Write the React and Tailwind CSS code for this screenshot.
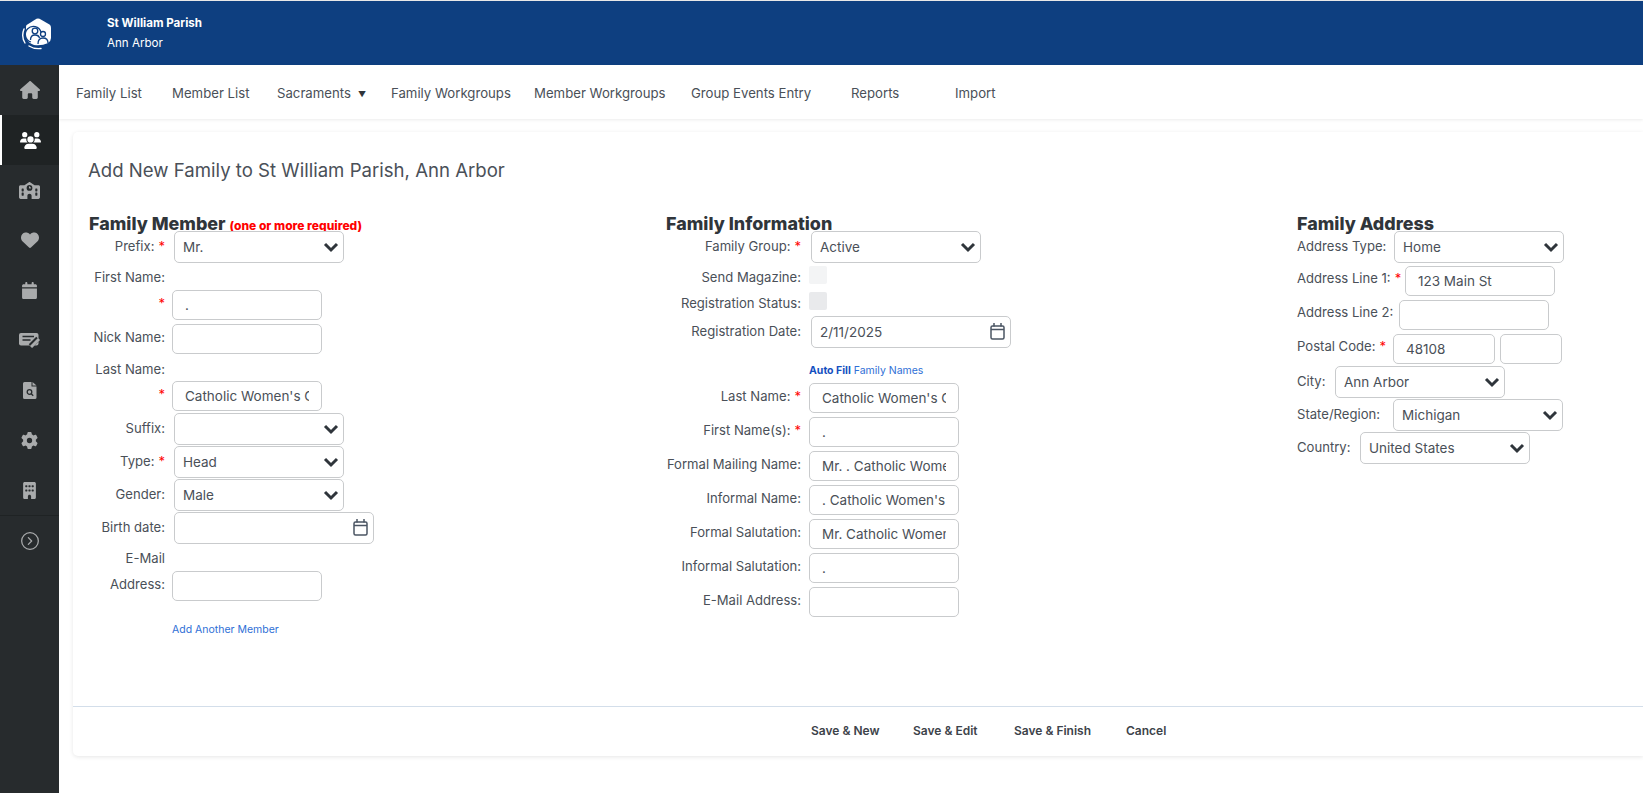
import React from "react";
import { CircleChevronRight } from "lucide-react";
import { FaHouse, FaUsers, FaSchool, FaHeart, FaCalendar, FaGear, FaBuilding } from "react-icons/fa6";

const Logo = () => (
  <svg width="30" height="32" viewBox="0 0 30 32" fill="none">
    <path d="M14.500 0.800 Q16 0 17.500 0.800 L27.500 6.500 Q29 7.500 29 9.500 V20 Q29 23 26 25 Q20 28 12 27 Q6 25 4 20 V8.500 Q4 7.500 5 6.800 Z" fill="#fff" />
    <path d="M9 24 A8 8 0 1 1 19 14" stroke="#0e3f80" strokeWidth="1.300" />
    <circle cx="13" cy="13" r="2.800" stroke="#0e3f80" strokeWidth="1.300" />
    <circle cx="21" cy="16" r="2.500" stroke="#0e3f80" strokeWidth="1.300" />
    <path d="M8.500 22 C8.500 18 10.500 17 13 17 C15 17 17 18 17.500 20" stroke="#0e3f80" strokeWidth="1.300" />
    <path d="M16 26 C16 21.500 18 20 21 20 C24 20 26 21.500 26 25" fill="#fff" stroke="#0e3f80" strokeWidth="1.300" />
    <path d="M2 11 C0 16 0.500 21 3 25" stroke="#fff" strokeWidth="1.400" strokeLinecap="round" />
    <path d="M7 28 C10 30 14 31 19 30.500" stroke="#fff" strokeWidth="1.400" strokeLinecap="round" />
  </svg>
);

const NotesPen = () => (
  <svg width="22" height="15" viewBox="0 0 22 15">
    <rect x="0" y="0" width="19.500" height="12.500" rx="2" fill="#a9abac" />
    <path d="M3.500 3.500h11.500M3.500 7h8" stroke="#272b2d" strokeWidth="1.300" />
    <path d="M11.500 13 L19 5.500" stroke="#272b2d" strokeWidth="5" />
    <path d="M12 14 L20 6" stroke="#a9abac" strokeWidth="3" />
  </svg>
);

const FileSearch = () => (
  <svg width="14" height="17" viewBox="0 0 14 17" fill="#a9abac">
    <path d="M1.500 0H8.500V4.500H13.500V15.500A1.500 1.500 0 0 1 12 17H1.500A1.500 1.500 0 0 1 0 15.500V1.500A1.500 1.500 0 0 1 1.500 0z" />
    <path d="M9.500 0L13.500 3.500H9.500z" />
    <circle cx="6.500" cy="10" r="2.300" fill="none" stroke="#272b2d" strokeWidth="1.300" />
    <path d="M8.200 11.700l2 2" stroke="#272b2d" strokeWidth="1.300" />
  </svg>
);

const sideItems = [
  { icon: <FaHouse size={20} color="#a9abac" /> },
  { icon: <FaUsers size={21} color="#fff" />, active: true },
  { icon: <FaSchool size={21} color="#a9abac" /> },
  { icon: <FaHeart size={18} color="#a9abac" /> },
  { icon: <FaCalendar size={17} color="#a9abac" /> },
  { icon: <NotesPen /> },
  { icon: <FileSearch /> },
  { icon: <FaGear size={17} color="#a9abac" /> },
  { icon: <FaBuilding size={17} color="#a9abac" /> },
];

const navItems = [
  ["Family List", "w-[96px]"],
  ["Member List", "w-[105px]"],
  ["Sacraments", "w-[114px]"],
  ["Family Workgroups", "w-[143px]"],
  ["Member Workgroups", "w-[157px]"],
  ["Group Events Entry", "w-[160px]"],
  ["Reports", "w-[104px]"],
  ["Import", "w-[60px]"],
];

const Req = () => <span className="text-[#ff0000] ml-1">*</span>;

const Chevron = () => (
  <svg className="absolute right-[5px] top-[10px] pointer-events-none" width="16" height="12" viewBox="0 0 16 12" fill="none">
    <path d="M2 3l6 6 6-6" stroke="#2f353b" strokeWidth="3" />
  </svg>
);

const Select = ({ value, className }) => (
  <div className={`relative h-8 ${className}`}>
    <select
      defaultValue={value}
      className="appearance-none w-full h-full rounded-[5px] border border-[#c9cbcd] bg-white pl-[8px] text-[13.5px] text-[#4a5058] outline-none"
    >
      <option>{value}</option>
    </select>
    <Chevron />
  </div>
);

const Input = ({ value = "", className = "w-[150px]" }) => (
  <input
    readOnly
    value={value}
    className={`h-[30px] rounded-[5px] border border-[#c9cbcd] bg-white pl-[12px] pr-[12px] text-[13.5px] text-[#4a5058] outline-none ${className}`}
  />
);

const DateField = ({ value = "", className }) => (
  <div className={`relative h-8 ${className}`}>
    <input
      readOnly
      value={value}
      className="w-full h-full rounded-[5px] border border-[#c9cbcd] bg-white pl-[8px] text-[13.5px] text-[#4a5058] outline-none"
    />
    <svg className="absolute right-[6px] top-[7px]" width="15" height="17" viewBox="0 0 15 17" fill="none" stroke="#4b5563" strokeWidth="1.500">
      <rect x="1" y="3" width="13" height="13" rx="1.500" />
      <path d="M1 6.500h13M4 0v3.500M11 0v3.500" />
    </svg>
  </div>
);

// label column is right aligned unless left is set, control sits after it
const Row = ({ label, req, width, left, children, className = "", labelClass = "" }) => (
  <div className={`flex items-start ${className}`}>
    <label className={`flex whitespace-nowrap text-[13.1px] leading-5 text-[#4a5058] shrink-0 ${left ? "justify-start" : "justify-end"} ${width} ${labelClass}`}>
      {label}
      {req && <Req />}
    </label>
    {children}
  </div>
);

const Heading = ({ children }) => (
  <h2 className="h-[19px] text-[17.9px] leading-5 font-extrabold whitespace-nowrap text-[#30353a]">{children}</h2>
);

const FamilyMember = () => (
  <div className="w-[577px] shrink-0">
    <Heading>
      Family Member{" "}
      <span className="text-[12px] text-[#ff0000]">(one or more required)</span>
    </Heading>
    <Row label="Prefix:" req width="w-[76px]" className="mt-[-2px]" labelClass="pt-[5px]">
      <Select value="Mr." className="w-[170px] ml-[9px]" />
    </Row>
    <Row label="First Name:" width="w-[76px]" className="mt-[4px]" />
    <Row label="" req width="w-[76px]" className="mt-[3px]" labelClass="pt-[3px]">
      <Input value="." className="w-[150px] ml-[7px]" />
    </Row>
    <Row label="Nick Name:" width="w-[76px]" className="mt-[4px]" labelClass="pt-[3px]">
      <Input className="w-[150px] ml-[7px]" />
    </Row>
    <Row label="Last Name:" width="w-[76px]" className="mt-[5px]" />
    <Row label="" req width="w-[76px]" className="mt-[2px]" labelClass="pt-[3px]">
      <Input value="Catholic Women's Guild" className="w-[150px] ml-[7px]" />
    </Row>
    <Row label="Suffix:" width="w-[76px]" className="mt-[2px]" labelClass="pt-[5px]">
      <Select value="" className="w-[170px] ml-[9px]" />
    </Row>
    <Row label="Type:" req width="w-[76px]" className="mt-[1px]" labelClass="pt-[5px]">
      <Select value="Head" className="w-[170px] ml-[9px]" />
    </Row>
    <Row label="Gender:" width="w-[76px]" className="mt-[1px]" labelClass="pt-[5px]">
      <Select value="Male" className="w-[170px] ml-[9px]" />
    </Row>
    <Row label="Birth date:" width="w-[76px]" className="mt-[1px]" labelClass="pt-[5px]">
      <DateField className="w-[200px] ml-[9px]" />
    </Row>
    <Row label="E-Mail" width="w-[76px]" className="mt-[4px]" />
    <Row label="Address:" width="w-[76px]" className="mt-[3px]" labelClass="pt-[3px]">
      <Input className="w-[150px] ml-[7px]" />
    </Row>
    <a className="block mt-[23px] ml-[83px] text-[10.5px] leading-3 text-[#2f6fd6]">Add Another Member</a>
  </div>
);

const FamilyInfo = () => {
  const rows = [
    ["Last Name:", true, "Catholic Women's Guild"],
    ["First Name(s):", true, "."],
    ["Formal Mailing Name:", false, "Mr. . Catholic Women's Guild"],
    ["Informal Name:", false, ". Catholic Women's Guild"],
    ["Formal Salutation:", false, "Mr. Catholic Women's Guild"],
    ["Informal Salutation:", false, "."],
    ["E-Mail Address:", false, ""],
  ];
  return (
    <div className="w-[631px] shrink-0">
      <Heading>Family Information</Heading>
      <Row label="Family Group:" req width="w-[135px]" className="mt-[-2px]" labelClass="pt-[5px]">
        <Select value="Active" className="w-[170px] ml-[10px]" />
      </Row>
      <Row label="Send Magazine:" width="w-[135px]" className="mt-[3px]" labelClass="pt-[1px]">
        <div className="w-[18px] h-[18px] ml-[8px] rounded-[2px] bg-[#f3f4f5]" />
      </Row>
      <Row label="Registration Status:" width="w-[135px]" className="mt-[5px]" labelClass="pt-[1px]">
        <div className="w-[18px] h-[18px] ml-[8px] rounded-[2px] bg-[#e9eaec]" />
      </Row>
      <Row label="Registration Date:" width="w-[135px]" className="mt-[3px]" labelClass="pt-[5px]">
        <DateField value="2/11/2025" className="w-[200px] ml-[10px]" />
      </Row>
      <p className="mt-[17px] ml-[143px] text-[10.5px] leading-3 text-[#2f6fd6]">
        <b className="text-[#1450c0]">Auto Fill</b> Family Names
      </p>
      <div className="mt-[6px] flex flex-col gap-[4px]">
        {rows.map(([label, req, value]) => (
          <Row key={label} label={label} req={req} width="w-[135px]" labelClass="pt-[3px]">
            <Input value={value} className="w-[150px] ml-[8px]" />
          </Row>
        ))}
      </div>
    </div>
  );
};

const FamilyAddress = () => (
  <div className="flex-1">
    <Heading>Family Address</Heading>
    <div className="mt-[-2px] flex flex-col">
      <Row label="Address Type:" left labelClass="pt-[5px]" width="w-[97px]">
        <Select value="Home" className="w-[170px]" />
      </Row>
      <Row label="Address Line 1:" req left labelClass="pt-[2px]" width="w-[108px]" className="mt-[3px]">
        <Input value="123 Main St" className="w-[150px]" />
      </Row>
      <Row label="Address Line 2:" left labelClass="pt-[2px]" width="w-[102px]" className="mt-[4px]">
        <Input className="w-[150px]" />
      </Row>
      <Row label="Postal Code:" req left labelClass="pt-[2px]" width="w-[96px]" className="mt-[4px]">
        <Input value="48108" className="w-[102px]" />
        <Input className="w-[62px] ml-[5px]" />
      </Row>
      <Row label="City:" left labelClass="pt-[5px]" width="w-[38px]" className="mt-[2px]">
        <Select value="Ann Arbor" className="w-[170px]" />
      </Row>
      <Row label="State/Region:" left labelClass="pt-[5px]" width="w-[96px]" className="mt-[1px]">
        <Select value="Michigan" className="w-[170px]" />
      </Row>
      <Row label="Country:" left labelClass="pt-[5px]" width="w-[63px]" className="mt-[1px]">
        <Select value="United States" className="w-[170px]" />
      </Row>
    </div>
  </div>
);

export default function App() {
  return (
    <div className="h-[793px] w-[1643px] overflow-hidden bg-white flex flex-col font-['Inter',sans-serif]">
      <header className="h-[65px] shrink-0 bg-[#0e3f80] border-t border-[#e8e8e8] flex items-center">
        <div className="w-[59px] pl-[22px] pt-[2px]">
          <Logo />
        </div>
        <div className="ml-[48px] text-white text-[11.6px] leading-5">
          <div className="font-bold">St William Parish</div>
          <div>Ann Arbor</div>
        </div>
      </header>
      <div className="flex flex-1 min-h-0">
        <aside className="w-[59px] shrink-0 bg-[#272b2d] flex flex-col">
          {sideItems.map((item, i) => (
            <div
              key={i}
              className={`h-[50px] flex items-center justify-center ${item.active ? "bg-[#1f2324] border-l-2 border-white" : ""}`}
            >
              {item.icon}
            </div>
          ))}
          <div className="h-[50px] border-t border-[#1f2324] flex items-center justify-center">
            <CircleChevronRight size={20} color="#a9abac" strokeWidth={1.500} />
          </div>
        </aside>
        <main className="flex-1 min-w-0">
          <nav className="h-[54px] flex items-center pl-[17px] pt-[3px] text-[13.2px] text-[#4a5058] shadow-[0_1px_3px_rgba(0,0,0,0.08)]">
            {navItems.map(([label, w]) => (
              <a key={label} className={`shrink-0 ${w}`}>
                {label}
                {label === "Sacraments" && <span className="ml-[7px] text-[8px] align-[1px] text-[#30353a]">▼</span>}
              </a>
            ))}
          </nav>
          <section className="ml-[14px] mt-[13px] h-[624px] rounded-l-[5px] bg-white shadow-[0_1px_4px_rgba(0,0,0,0.1)] flex flex-col">
            <h1 className="pl-[15px] pt-[24px] text-[18.6px] leading-7 text-[#4a5058]">
              Add New Family to St William Parish, Ann Arbor
            </h1>
            <div className="flex pl-[16px] pt-[30px] flex-1">
              <FamilyMember />
              <FamilyInfo />
              <FamilyAddress />
            </div>
            <footer className="h-[50px] border-t border-[#d3deea] flex items-center pl-[738px] pb-[2px] text-[12px] font-semibold text-[#3d434a]">
              <button className="w-[102px] text-left">Save &amp; New</button>
              <button className="w-[101px] text-left">Save &amp; Edit</button>
              <button className="w-[112px] text-left">Save &amp; Finish</button>
              <button className="text-left">Cancel</button>
            </footer>
          </section>
        </main>
      </div>
    </div>
  );
}
